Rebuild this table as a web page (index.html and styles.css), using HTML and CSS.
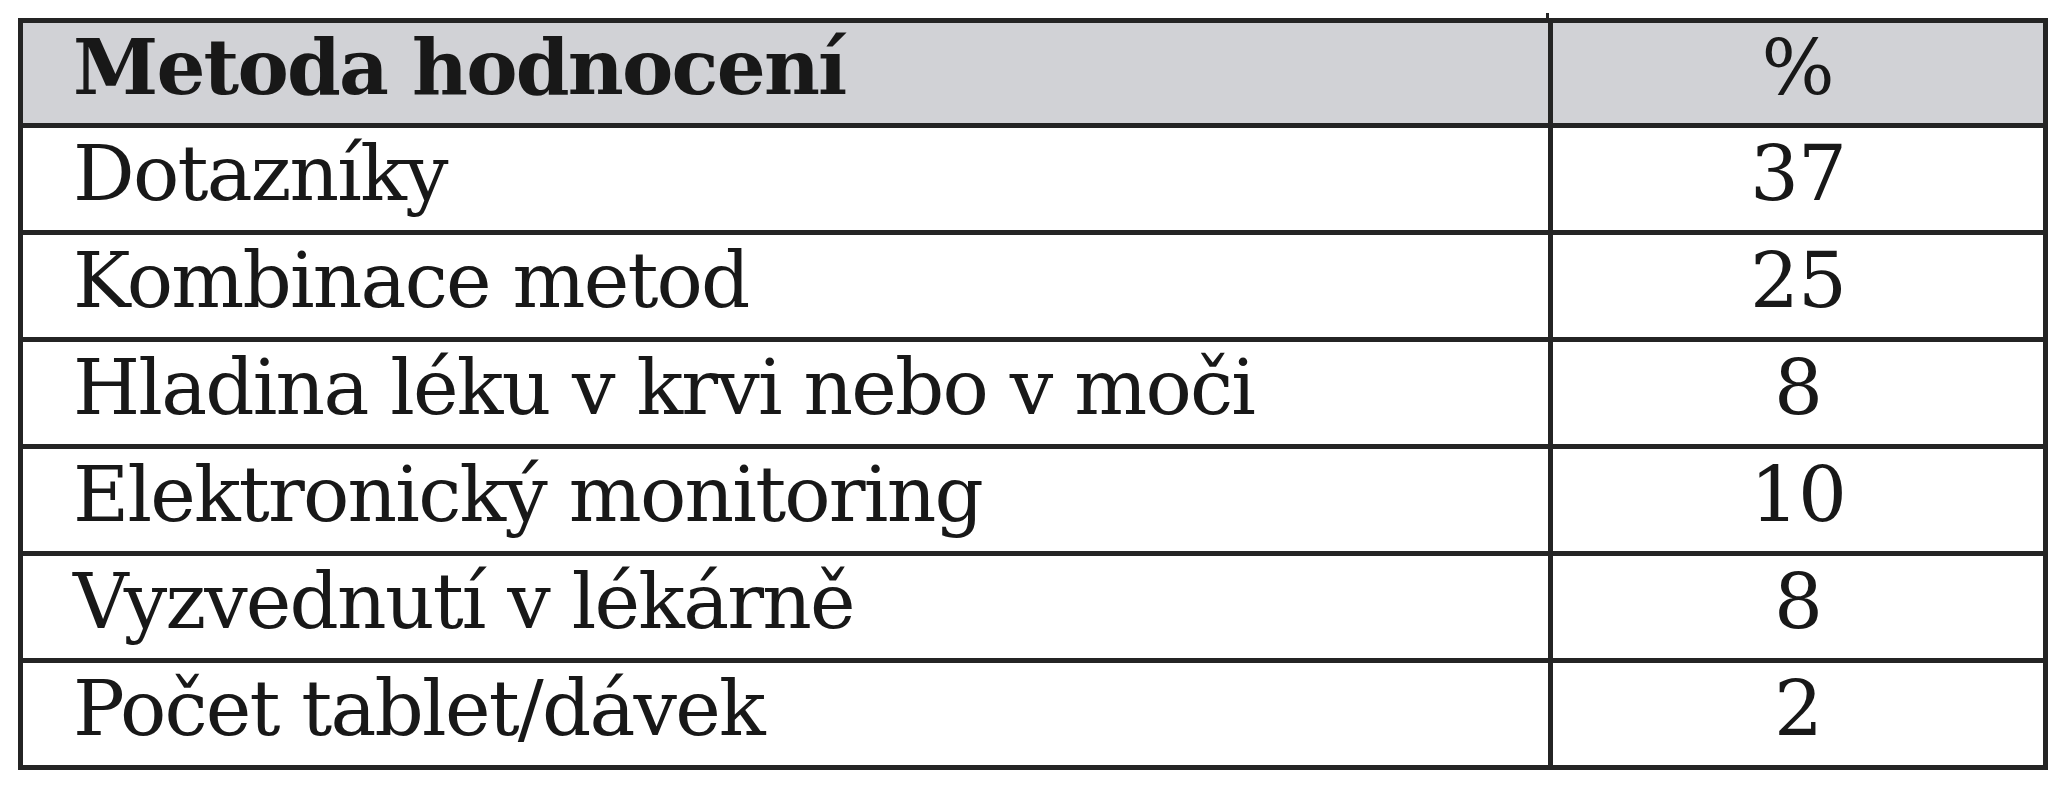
FILE: index.html
```html
<!DOCTYPE html>
<html lang="cs">
<head>
<meta charset="utf-8">
<title>Metoda hodnocení</title>
<link rel="stylesheet" href="styles.css">
</head>
<body>
<div class="wrap">
<table class="tbl">
  <thead>
    <tr><th class="c-name">Metoda hodnocení</th><th class="c-val pct">%</th></tr>
  </thead>
  <tbody>
    <tr><td class="c-name">Dotazníky</td><td class="c-val">37</td></tr>
    <tr><td class="c-name">Kombinace metod</td><td class="c-val">25</td></tr>
    <tr><td class="c-name">Hladina léku v krvi nebo v moči</td><td class="c-val">8</td></tr>
    <tr><td class="c-name">Elektronický monitoring</td><td class="c-val">10</td></tr>
    <tr><td class="c-name">Vyzvednutí v lékárně</td><td class="c-val">8</td></tr>
    <tr><td class="c-name">Počet tablet/dávek</td><td class="c-val">2</td></tr>
  </tbody>
</table>
<span class="tick"></span>
</div>
</body>
</html>
```
FILE: styles.css
```css
html, body {
  margin: 0;
  padding: 0;
  background: #ffffff;
}

.wrap {
  position: relative;
  padding: 18px 0 0 18px;
}

.tbl {
  border-collapse: collapse;
  width: 2030px;
  font-family: "DejaVu Serif", "Liberation Serif", serif;
  font-size: 77px;
  letter-spacing: -1.8px;
  color: #181818;
  table-layout: fixed;
}

.tbl th,
.tbl td {
  border: 5px solid #242424;
  height: 107px;
  line-height: 1;
  padding: 0 0 12px 0;
  vertical-align: middle;
  box-sizing: border-box;
}

.tbl thead th {
  background: #d1d2d6;
  font-weight: bold;
  letter-spacing: -1.8px;
  height: 105px;
}

.tbl .c-name {
  width: 1530px;
  text-align: left;
  padding-left: 50px;
}

.tbl .c-val {
  text-align: center;
  letter-spacing: -1px;
}

.tbl th.pct {
  font-weight: normal;
  letter-spacing: 0;
}

.tick {
  position: absolute;
  left: 1546px;
  top: 13px;
  width: 3px;
  height: 8px;
  background: #242424;
}
```
